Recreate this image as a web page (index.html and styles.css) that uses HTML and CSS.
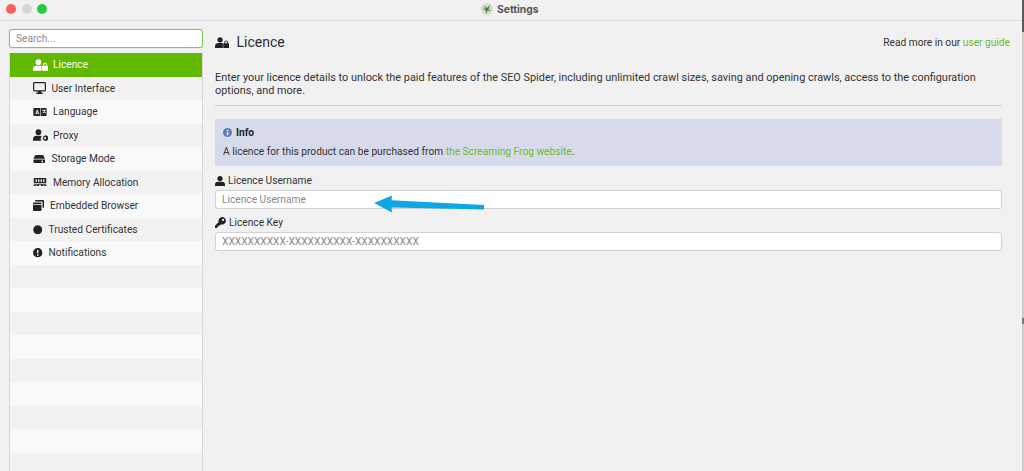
FILE: index.html
```html
<!DOCTYPE html>
<html lang="en">
<head>
<meta charset="utf-8">
<title>Settings</title>
<link rel="stylesheet" href="styles.css">
</head>
<body>
<svg class="defs" width="0" height="0" aria-hidden="true">
  <symbol id="i-licence" viewBox="0 0 18 14">
    <circle cx="6.5" cy="3.6" r="3.4"/>
    <path d="M0 14v-2.2C0 9.2 2 7.8 4.2 7.8h4.4c.6 0 1.1.1 1.5.3V14z"/>
    <path d="M11 8h6.6a.4.4 0 0 1 .4.4v5.2a.4.4 0 0 1-.4.4H11a.4.4 0 0 1-.4-.4V8.4A.4.4 0 0 1 11 8z"/>
    <path d="M12 8V6.6a2.3 2.3 0 0 1 4.6 0V8h-1.2V6.6a1.1 1.1 0 0 0-2.2 0V8z"/>
  </symbol>
  <symbol id="i-monitor" viewBox="0 0 14 13">
    <path fill-rule="evenodd" d="M1.4 0h11.2C13.4 0 14 .6 14 1.4v7.4c0 .8-.6 1.4-1.4 1.4H8.8l.3 1.5h1.4v1.3h-7v-1.3h1.4l.3-1.5H1.4C.6 10.2 0 9.6 0 8.8V1.4C0 .6.6 0 1.4 0zm-.1 1.3v7.6h11.4V1.3z"/>
  </symbol>
  <symbol id="i-language" viewBox="0 0 15 9">
    <path fill-rule="evenodd" d="M1 0h6.7v9H1a1 1 0 0 1-1-1V1a1 1 0 0 1 1-1zm2.9 2L2.2 7h1.1l.3-.9h1.700l.3.9h1.100L4.900 2zm.5 1.300.6 2H3.800z"/>
    <path fill-rule="evenodd" d="M8.300 0H14a1 1 0 0 1 1 1v7a1 1 0 0 1-1 1H8.300zm1.700 2v1h2.400c-.2.700-1.200 1.900-2.400 2.500l.5.800c.8-.4 1.400-.9 1.800-1.400.4.500 1 1 1.700 1.300l.4-.8c-.7-.3-1.200-.7-1.600-1.200.4-.6.700-1.200.8-1.700h.6V2z"/>
  </symbol>
  <symbol id="i-proxy" viewBox="0 0 18 14">
    <circle cx="6.5" cy="3.6" r="3.4"/>
    <path d="M0 14v-2.2C0 9.2 2 7.8 4.2 7.8h4.4c.8 0 1.5.2 2 .6A4.5 4.5 0 0 0 10 14z"/>
    <path fill-rule="evenodd" d="M14.5 7.5a3.3 3.3 0 1 1 0 6.5 3.3 3.3 0 0 1 0-6.500zm0 2a1.3 1.3 0 1 0 0 2.600 1.300 1.300 0 0 0 0-2.600z"/>
  </symbol>
  <symbol id="i-storage" viewBox="0 0 13 9">
    <path d="M2.700 0h7.600c.4 0 .8.300 1 .6L13 4.300H0L1.700.6c.2-.3.600-.6 1-.6z"/>
    <path fill-rule="evenodd" d="M.8 5h11.400c.4 0 .8.400.8.800v2.400c0 .4-.4.800-.8.800H.8A.8.800 0 0 1 0 8.200V5.800C0 5.400.4 5 .8 5zm9.700 1.500a1 1 0 1 0 0 1.600 1 1 0 0 0 0-1.600z"/>
  </symbol>
  <symbol id="i-memory" viewBox="0 0 14 9">
    <path fill-rule="evenodd" d="M0 0h14v6H0zm2 1.500V4.500h1.500V1.500zm2.800 0V4.500h1.500V1.500zm2.900 0V4.500h1.500V1.500zm2.800 0V4.500H12V1.500z"/>
    <path d="M0 7h14v2h-2V8h-1v1H8V8H6v1H3V8H2v1H0z"/>
  </symbol>
  <symbol id="i-browser" viewBox="0 0 11 11">
    <path d="M3 0h7a1 1 0 0 1 1 1v6a1 1 0 0 1-1 1h-.4V2.500A1.100 1.100 0 0 0 8.500 1.400H2V1a1 1 0 0 1 1-1z"/>
    <path d="M1 2.500h6.500a1 1 0 0 1 1 1V4H0v-.5a1 1 0 0 1 1-1z"/>
    <path d="M0 4.700h8.500V10a1 1 0 0 1-1 1H1a1 1 0 0 1-1-1z"/>
  </symbol>
  <symbol id="i-cert" viewBox="0 0 10 10">
    <path d="M5 0l1.200.8L7.500.6l.6 1.300 1.300.6-.2 1.300L10 5l-.8 1.200.2 1.300-1.300.6-.6 1.300-1.300-.2L5 10l-1.200-.8-1.300.2-.6-1.300-1.300-.6.200-1.300L0 5l.800-1.200L.6 2.500l1.300-.6.600-1.300 1.300.2z"/>
  </symbol>
  <symbol id="i-alert" viewBox="0 0 10 10">
    <path fill-rule="evenodd" d="M5 0a5 5 0 1 1 0 10A5 5 0 0 1 5 0zM4.200 2l.2 3.800h1.200L5.800 2zM5 6.500a.9.900 0 1 0 0 1.800.9.900 0 0 0 0-1.800z"/>
  </symbol>
  <symbol id="i-user" viewBox="0 0 10 10">
    <circle cx="5" cy="2.600" r="2.600"/>
    <path d="M0 10V8.300C0 6.800 1.200 5.700 2.700 5.700h4.600C8.800 5.700 10 6.800 10 8.300V10z"/>
  </symbol>
  <symbol id="i-key" viewBox="0 0 11 11">
    <path fill-rule="evenodd" d="M7.200 0a3.800 3.800 0 1 1-1.300 7.400L4.800 8.500H3.500v1.300H2.200V11H0V8.800l3.700-3.700A3.800 3.800 0 0 1 7.200 0zm.9 1.800a1.100 1.100 0 1 0 0 2.200 1.100 1.100 0 0 0 0-2.200z"/>
  </symbol>
</svg>

<header class="titlebar">
  <div class="traffic">
    <span class="light light-red"></span>
    <span class="light light-grey"></span>
    <span class="light light-green"></span>
  </div>
  <div class="title">
    <svg class="frog" viewBox="0 0 12 12"><circle cx="6" cy="6" r="6" fill="#cfe3c4"/><path d="M3 2.500l3 2.500 3-3-1.500 4.500L10.500 8 6.500 7.500 5 11 4.500 7 1.500 6l3-.5z" fill="#5b6b58"/></svg>
    <span>Settings</span>
  </div>
</header>

<main class="window">
  <aside class="sidebar">
    <input class="search" type="text" placeholder="Search...">
    <ul class="nav">
      <li class="row active"><svg class="ic ic-17"><use href="#i-licence"/></svg><span class="lbl-a">Licence</span></li>
      <li class="row"><svg class="ic ic-mon"><use href="#i-monitor"/></svg><span class="lbl-b">User Interface</span></li>
      <li class="row"><svg class="ic ic-lang"><use href="#i-language"/></svg><span class="lbl-c">Language</span></li>
      <li class="row"><svg class="ic ic-17"><use href="#i-proxy"/></svg><span class="lbl-a">Proxy</span></li>
      <li class="row"><svg class="ic ic-sto"><use href="#i-storage"/></svg><span class="lbl-c">Storage Mode</span></li>
      <li class="row"><svg class="ic ic-lang"><use href="#i-memory"/></svg><span class="lbl-c">Memory Allocation</span></li>
      <li class="row"><svg class="ic ic-bro"><use href="#i-browser"/></svg><span class="lbl-c">Embedded Browser</span></li>
      <li class="row"><svg class="ic ic-cer"><use href="#i-cert"/></svg><span class="lbl-c">Trusted Certificates</span></li>
      <li class="row"><svg class="ic ic-cer"><use href="#i-alert"/></svg><span class="lbl-c">Notifications</span></li>
      <li class="row"></li><li class="row"></li><li class="row"></li><li class="row"></li>
      <li class="row"></li><li class="row"></li><li class="row"></li><li class="row"></li><li class="row"></li>
    </ul>
  </aside>

  <section class="content">
    <div class="head">
      <h1 class="heading"><svg class="ic-head"><use href="#i-licence"/></svg>Licence</h1>
      <p class="guide">Read more in our <a href="#">user guide</a></p>
    </div>
    <p class="intro">Enter your licence details to unlock the paid features of the SEO Spider, including unlimited crawl sizes, saving and opening crawls, access to the configuration options, and more.</p>
    <div class="info">
      <div class="info-title">
        <svg class="ic-info" viewBox="0 0 10 10"><circle cx="5" cy="5" r="5" fill="#5f7fb8"/><rect x="4.3" y="4.2" width="1.5" height="3.8" fill="#fff"/><circle cx="5" cy="2.8" r=".9" fill="#fff"/></svg>
        <strong>Info</strong>
      </div>
      <p class="info-text">A licence for this product can be purchased from <a href="#">the Screaming Frog website</a>.</p>
    </div>
    <label class="field-label"><svg class="ic-field"><use href="#i-user"/></svg>Licence Username</label>
    <input class="field" type="text" placeholder="Licence Username">
    <label class="field-label field-key"><svg class="ic-key"><use href="#i-key"/></svg>Licence Key</label>
    <input class="field" type="text" placeholder="XXXXXXXXXX-XXXXXXXXXX-XXXXXXXXXX">
  </section>
</main>

<svg class="arrow" viewBox="0 0 114 20"><polygon points="2,9 20,1.5 19.5,6.2 112,11 112,15.5 19.5,13.5 20,18.5" fill="#0ea7e6"/></svg>
<div class="edge"><span class="edge-top"></span><span class="edge-tick"></span></div>
</body>
</html>
```
FILE: styles.css
```css
* { box-sizing: border-box; }
html, body { height: 100%; }
body {
  margin: 0;
  width: 1024px;
  height: 471px;
  overflow: hidden;
  position: relative;
  background: #f1f1f1;
  color: #2b2b2b;
  font-family: Roboto, "Liberation Sans", sans-serif;
  font-size: 10.2px;
}
.defs { position: absolute; }
a { color: #6abb2c; text-decoration: none; }

.titlebar {
  height: 21px;
  border-bottom: 1px solid #dedede;
  background: #f1f1f1;
  display: flex;
  align-items: center;
  position: relative;
  padding-bottom: 2px;
}
.traffic { display: flex; gap: 5.5px; padding-left: 6px; }
.light { width: 10px; height: 10px; border-radius: 50%; }
.light-red { background: #fd5f58; }
.light-grey { background: #d6d6d6; }
.light-green { background: #28c840; }
.title {
  position: absolute;
  left: 481px;
  top: 2px;
  display: flex;
  align-items: center;
  gap: 4px;
  font-size: 10.3px;
  font-weight: 700;
  color: #555;
  font-family: "Inter", Roboto, sans-serif;
  height: 14px;
}
.frog { width: 12px; height: 12px; }

.window { display: flex; height: 450px; }
.sidebar { width: 204px; padding: 8px 0 0 9px; flex: none; }
.search {
  display: block;
  width: 194px;
  height: 19px;
  border: 1px solid #80c850;
  border-radius: 3px;
  box-shadow: 0 0 1px #9ad672;
  background: #fff;
  padding: 0 6px;
  font: 10.2px Roboto, sans-serif;
  outline: none;
}
.search::placeholder { color: #8c8c8c; }
.nav {
  list-style: none;
  margin: 5px 0 0;
  padding: 0;
  width: 194px;
  border-left: 1px solid #d8d8d8;
  border-right: 1px solid #d8d8d8;
}
.row {
  height: 23.5px;
  display: flex;
  align-items: center;
  position: relative;
  background: #f9f9f9;
  color: #333;
}
.row:nth-child(even) { background: #f2f2f2; }
.row.active { background: #60b800; color: #fff; }
.row.active .ic { fill: #fff; }
.ic { fill: #222; flex: none; margin-left: 23px; }
.ic-17 { width: 15px; height: 12px; }
.ic-mon { width: 13px; height: 12px; }
.ic-lang { width: 14px; height: 8px; }
.ic-sto { width: 12.5px; height: 8px; }
.ic-bro { width: 11px; height: 11px; }
.ic-cer { width: 9.5px; height: 9.5px; }
.lbl-a { margin-left: 5px; }
.lbl-b { margin-left: 5.5px; }
.lbl-c { margin-left: 6px; }

.content { flex: 1; padding: 0 14px 0 11px; min-width: 0; }
.head {
  display: flex;
  justify-content: space-between;
  align-items: center;
  height: 22px;
  margin-top: 10px;
}
.heading {
  margin: 0;
  display: flex;
  align-items: center;
  font-size: 14px;
  font-weight: 400;
  color: #2b2b2b;
}
.ic-head { width: 14px; height: 11px; margin-right: 7.5px; fill: #222; }
.guide { margin: 0; color: #333; }
.intro {
  margin: 18px 0 0;
  line-height: 13px;
  padding-bottom: 8px;
  border-bottom: 1px solid #cfcfcf;
  color: #333;
  width: 787px;
  font-size: 10.9px;
}
.info {
  height: 47px;
  width: 787px;
  margin-top: 13px;
  background: #d6daea;
  padding: 7px 8px;
}
.info-title { display: flex; align-items: center; gap: 4px; height: 13px; color: #222; }
.ic-info { width: 9px; height: 9px; }
.info-text { margin: 7px 0 0; color: #333; }
.field-label {
  display: flex;
  align-items: center;
  height: 13px;
  margin-top: 8px;
  color: #333;
}
.field-key { margin-top: 7px; }
.ic-field { width: 10px; height: 10px; fill: #222; margin-right: 3px; }
.ic-key { width: 11px; height: 11px; fill: #222; margin-right: 3px; }
.field {
  display: block;
  width: 787px;
  height: 19px;
  margin-top: 3px;
  border: 1px solid #d2d2d2;
  border-radius: 3px;
  background: #fff;
  padding: 0 6px;
  font: 10.2px Roboto, sans-serif;
  outline: none;
}
.field::placeholder { color: #8a8a8a; }

.arrow {
  position: absolute;
  left: 372px;
  top: 194px;
  width: 114px;
  height: 20px;
}

.edge {
  position: absolute;
  right: 0;
  top: 0;
  width: 2px;
  height: 471px;
  background: #cdcdcd;
}
.edge-top { display: block; height: 32px; background: #5a5a5a; }
.edge-tick {
  position: absolute;
  left: 0;
  top: 318px;
  width: 2px;
  height: 6px;
  background: #777;
}
```
